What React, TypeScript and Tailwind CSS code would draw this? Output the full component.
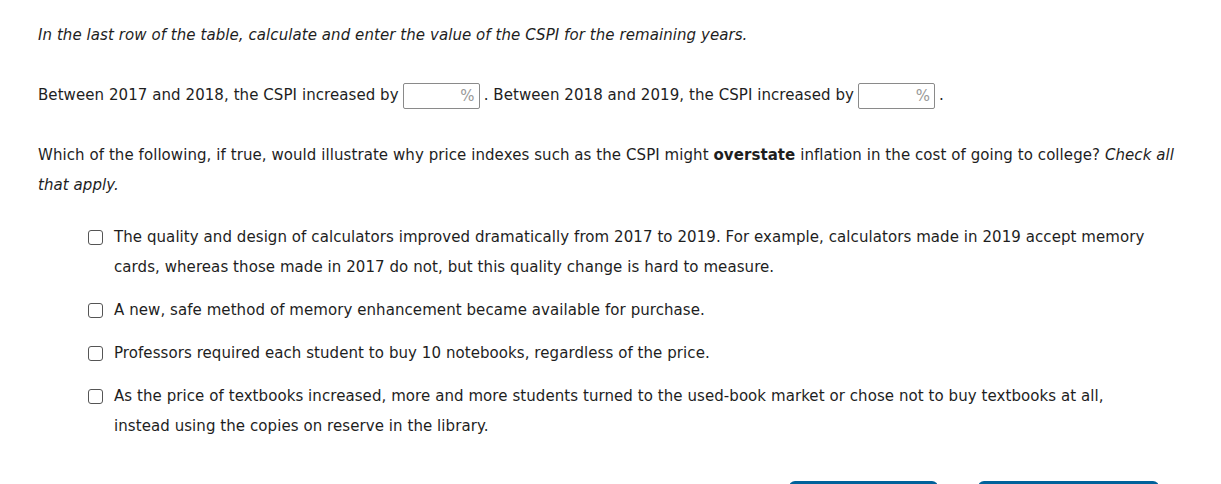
import React from 'react';

const options = [
  'The quality and design of calculators improved dramatically from 2017 to 2019. For example, calculators made in 2019 accept memory cards, whereas those made in 2017 do not, but this quality change is hard to measure.',
  'A new, safe method of memory enhancement became available for purchase.',
  'Professors required each student to buy 10 notebooks, regardless of the price.',
  'As the price of textbooks increased, more and more students turned to the used-book market or chose not to buy textbooks at all, instead using the copies on reserve in the library.',
];

function PercentBox() {
  return (
    <span className="inline-flex items-center justify-end w-[77px] h-[26px] border border-[#8a8a8a] rounded-[2px] pr-[4px] align-middle text-[#999] mx-[4px]">
      %
    </span>
  );
}

export default function App() {
  return (
    <div className="w-[1221px] h-[484px] overflow-hidden bg-white text-[#1e1e1e] text-[15px] leading-[30px] tracking-[0.07px] font-['Verdana','DejaVu_Sans',sans-serif]">
      <div className="pl-[38px] pr-[40px] pt-[20px]">
        <p className="italic">In the last row of the table, calculate and enter the value of the CSPI for the remaining years.</p>

        <p className="mt-[30px]">
          Between 2017 and 2018, the CSPI increased by
          <PercentBox />. Between 2018 and 2019, the CSPI increased by
          <PercentBox />.
        </p>

        <p className="mt-[30px]">
          Which of the following, if true, would illustrate why price indexes such as the CSPI might{' '}
          <b>overstate</b> inflation in the cost of going to college? <i>Check all that apply.</i>
        </p>

        <div className="mt-[22px] pl-[50px] flex flex-col gap-[13px]">
          {options.map((o) => (
            <label key={o} className="flex items-start">
              <span className="mt-[8px] mr-[11px] w-[15px] h-[15px] shrink-0 border-[1.5px] border-[#555] rounded-[3px] bg-white" />
              <span className="max-w-[1040px]">{o}</span>
            </label>
          ))}
        </div>

        <div className="flex justify-end gap-[40px] mt-[40px] pr-[22px]">
          <div className="w-[149px] h-[20px] bg-[#00629b] rounded-t-[6px]" />
          <div className="w-[181px] h-[20px] bg-[#00629b] rounded-t-[6px]" />
        </div>
      </div>
    </div>
  );
}
